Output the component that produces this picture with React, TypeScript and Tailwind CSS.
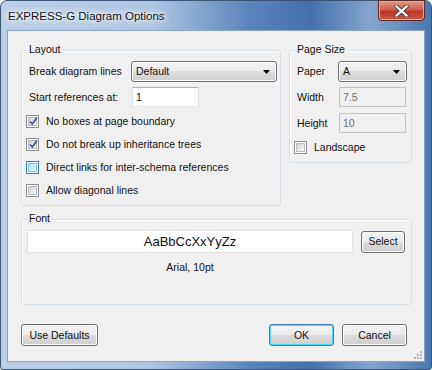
import React from "react";

function Check({ checked, hover, label }: { checked?: boolean; hover?: boolean; label: string }) {
  return (
    <div className="flex items-center h-[23px] pl-[4px]">
      <span
        className={
          hover
            ? "w-[13px] h-[13px] border border-[#3c7fb1] bg-[#def9fa] p-[1px] flex"
            : "w-[13px] h-[13px] border border-[#8f8f8f] bg-white p-[1px] flex"
        }
      >
        <span
          className={
            hover
              ? "flex-1 relative border border-[#79c6f9] bg-[linear-gradient(135deg,#b1dffd,#e9f7fe)]"
              : "flex-1 relative border border-[#b8bcc0] bg-[linear-gradient(135deg,#cfd2d6,#f7f7f7)]"
          }
        >
          {checked && (
            <svg width="11" height="11" viewBox="0 0 11 11" className="absolute -left-[1px] -top-[2px]">
              <path d="M2 5.5 L4.3 8 L9 1.5" fill="none" stroke="#3b5096" strokeWidth="1.7" />
            </svg>
          )}
        </span>
      </span>
      <span className="ml-[7px]">{label}</span>
    </div>
  );
}

function Combo({ value, w }: { value: string; w: string }) {
  return (
    <div
      className={`${w} h-[21px] rounded-[3px] border border-[#707070] bg-[linear-gradient(#f2f2f2,#ebebeb_50%,#dddddd_50%,#cfcfcf)] flex items-center pl-[4px] pr-[6px] shadow-[inset_0_0_0_1px_#fcfcfc]`}
    >
      <span className="flex-1">{value}</span>
      <svg width="7" height="4" viewBox="0 0 7 4">
        <path d="M0 0 H7 L3.5 4 Z" fill="#000" />
      </svg>
    </div>
  );
}

function Group({ label, className, children }: { label: string; className: string; children: React.ReactNode }) {
  return (
    <div className={`relative border border-[#d5dfe5] rounded-[3px] shadow-[inset_1px_1px_0_#fff] ${className}`}>
      <span className="absolute left-[5px] -top-[8px] px-[2px] bg-[#f0f0f0] leading-[13px]">{label}</span>
      {children}
    </div>
  );
}

function Button({ children, w, def }: { children: React.ReactNode; w: string; def?: boolean }) {
  return (
    <div
      className={
        def
          ? `${w} h-[22px] rounded-[3px] border border-[#3c7fb1] bg-[linear-gradient(#f2f2f2,#ebebeb_50%,#dddddd_50%,#cfcfcf)] shadow-[inset_0_0_0_1px_#48d7fb] flex items-center justify-center`
          : `${w} h-[22px] rounded-[3px] border border-[#707070] bg-[linear-gradient(#f2f2f2,#ebebeb_50%,#dddddd_50%,#cfcfcf)] shadow-[inset_0_0_0_1px_#fcfcfc] flex items-center justify-center`
      }
    >
      {children}
    </div>
  );
}

export default function App() {
  return (
    <div className="w-[432px] h-[370px] bg-white font-['Liberation_Sans',Arial,sans-serif] text-[10.5px] text-[#111] leading-[13px]">
      <div className="w-[432px] h-[370px] rounded-t-[7px] rounded-b-[3px] border border-[#3a5578] bg-[linear-gradient(90deg,#bcd1e8_0%,#aec6e2_35%,#5a84bc_58%,#4370aa_72%,#86a6d0_86%,#4a76b0_100%)] flex flex-col">
        <div className="h-[29px] flex items-start">
          <span className="ml-[7px] mt-[8px] text-[11.5px] leading-[14px] [text-shadow:0_0_6px_#fff,0_0_10px_#fff,0_0_3px_#fff]">
            EXPRESS-G Diagram Options
          </span>
          <div className="ml-auto mr-[6px] -mt-[1px] w-[47px] h-[21px] rounded-b-[4px] border border-[#5b2a26] bg-[linear-gradient(#e0998a,#d0604c_45%,#bb3526_55%,#cf5a44)] shadow-[inset_0_0_0_1px_#e6aa9d] flex items-center justify-center">
            <svg width="15" height="12" viewBox="0 0 15 12">
              <path d="M2.5 1.5 L12.5 10.5 M12.5 1.5 L2.5 10.5" stroke="#4a4a4a" strokeWidth="4.2" strokeLinecap="square" />
              <path d="M2.5 1.5 L12.5 10.5 M12.5 1.5 L2.5 10.5" stroke="#ffffff" strokeWidth="2.2" strokeLinecap="square" />
            </svg>
          </div>
        </div>
        <div className="mx-[6px] h-[332px] border border-[#8aa3c2] bg-[#f0f0f0] flex flex-col pl-[13px] relative">
          <div className="flex mt-[19px] gap-[8px]">
            <Group label="Layout" className="w-[260px] h-[156px]">
              <div className="flex flex-col pt-[10px]">
                <div className="flex items-center pl-[7px]">
                  <span className="w-[102px]">Break diagram lines</span>
                  <Combo value="Default" w="w-[146px]" />
                </div>
                <div className="flex items-center pl-[7px] mt-[5px]">
                  <span className="w-[103px]">Start references at:</span>
                  <div className="w-[67px] h-[20px] bg-white border border-t-[#abadb3] border-x-[#dbdfe6] border-b-[#e3e9ef] flex items-center pl-[3px]">
                    1
                  </div>
                </div>
                <div className="flex flex-col mt-[3px]">
                  <Check checked label="No boxes at page boundary" />
                  <Check checked label="Do not break up inheritance trees" />
                  <Check hover label="Direct links for inter-schema references" />
                  <Check label="Allow diagonal lines" />
                </div>
              </div>
            </Group>
            <Group label="Page Size" className="w-[123px] h-[113px]">
              <div className="flex flex-col pt-[10px]">
                <div className="flex items-center pl-[7px]">
                  <span className="w-[41px]">Paper</span>
                  <Combo value="A" w="w-[69px]" />
                </div>
                <div className="flex items-center pl-[7px] mt-[5px]">
                  <span className="w-[42px]">Width</span>
                  <div className="w-[67px] h-[20px] border border-[#c4c4c4] flex items-center pl-[3px] text-[#6d6d6d]">
                    7.5
                  </div>
                </div>
                <div className="flex items-center pl-[7px] mt-[6px]">
                  <span className="w-[42px]">Height</span>
                  <div className="w-[67px] h-[20px] border border-[#c4c4c4] flex items-center pl-[3px] text-[#6d6d6d]">
                    10
                  </div>
                </div>
                <div className="mt-[3px]">
                  <Check label="Landscape" />
                </div>
              </div>
            </Group>
          </div>
          <Group label="Font" className="w-[391px] h-[86px] mt-[13px]">
            <div className="flex flex-col pt-[10px] pl-[5px]">
              <div className="flex items-center">
                <div className="w-[326px] h-[23px] bg-white border border-[#e2e2e2] flex items-center justify-center text-[13px]">
                  AaBbCcXxYyZz
                </div>
                <div className="ml-[8px]">
                  <Button w="w-[44px]">Select</Button>
                </div>
              </div>
              <div className="w-[326px] text-center mt-[8px]">Arial, 10pt</div>
            </div>
          </Group>
          <div className="flex mt-[19px] pr-[17px]">
            <Button w="w-[77px]">Use Defaults</Button>
            <div className="ml-auto flex gap-[8px]">
              <Button w="w-[65px]" def>
                OK
              </Button>
              <Button w="w-[65px]">Cancel</Button>
            </div>
          </div>
          <svg width="10" height="10" viewBox="0 0 10 10" className="absolute right-[1px] bottom-[1px]">
            <rect x="7" y="1" width="2" height="2" fill="#b8b8b8" />
            <rect x="4" y="4" width="2" height="2" fill="#b8b8b8" />
            <rect x="7" y="4" width="2" height="2" fill="#b8b8b8" />
            <rect x="1" y="7" width="2" height="2" fill="#b8b8b8" />
            <rect x="4" y="7" width="2" height="2" fill="#b8b8b8" />
            <rect x="7" y="7" width="2" height="2" fill="#b8b8b8" />
          </svg>
        </div>
      </div>
    </div>
  );
}
